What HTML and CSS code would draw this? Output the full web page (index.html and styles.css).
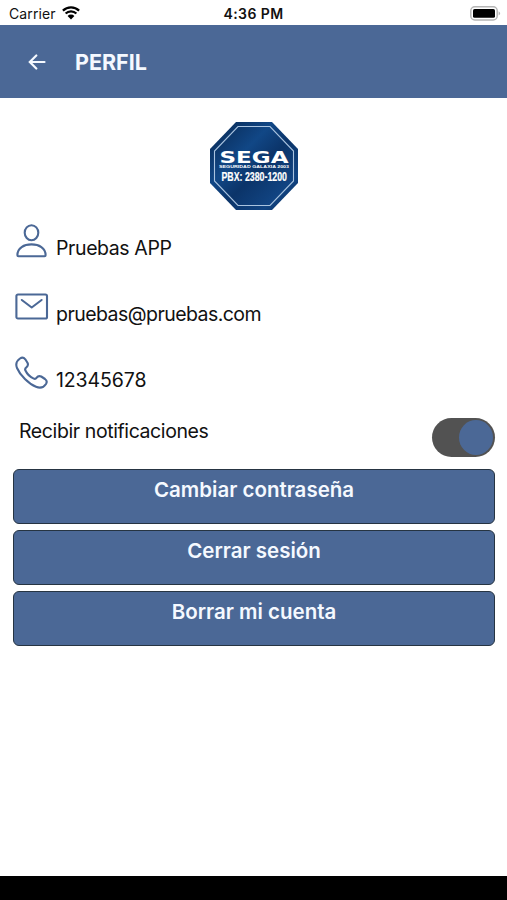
FILE: index.html
```html
<!DOCTYPE html>
<html lang="es">

<head>
    <meta charset="UTF-8">
    <meta name="viewport" content="width=device-width, initial-scale=1.0">
    <title>Perfil</title>
    <link rel="stylesheet" href="styles.css">
</head>

<body>
    <div class="status-bar">
        <div class="carrier">
            <span>Carrier</span>
            <svg class="wifi" width="18" height="14" viewBox="0 0 18 14">
                <path d="M0.9 4.6a11.6 11.6 0 0 1 16.2 0M3.6 7.5a7.7 7.7 0 0 1 10.8 0" fill="none" stroke="#000" stroke-width="2.2" />
                <path d="M9 13.5L5.6 10a4.8 4.8 0 0 1 6.8 0z" fill="#000" />
            </svg>
        </div>
        <div class="time">4:36 PM</div>
        <div class="battery">
            <svg width="31" height="15" viewBox="0 0 31 15">
                <rect x="0.8" y="0.8" width="26.4" height="13.2" rx="4" fill="#fff" stroke="#b5b5b5" stroke-width="1.5" />
                <rect x="3" y="3" width="22" height="8.8" rx="1.6" fill="#000" />
                <path d="M28.6 5.2q3 2.2 0 4.4z" fill="#b5b5b5" />
            </svg>
        </div>
    </div>

    <header class="header">
        <svg class="back" width="18" height="16" viewBox="0 0 18 16">
            <path d="M16.5 8H2M8.3 1.5L1.8 8L8.3 14.5" />
        </svg>
        <h1>PERFIL</h1>
    </header>

    <main class="content">
        <svg class="logo" width="88" height="88" viewBox="0 0 88 88">
            <defs>
                <linearGradient id="shield" x1="0" y1="0" x2="1" y2="1">
                    <stop offset="0" stop-color="#07264f" />
                    <stop offset="0.36" stop-color="#114786" />
                    <stop offset="0.55" stop-color="#0b3469" />
                    <stop offset="0.8" stop-color="#114482" />
                    <stop offset="1" stop-color="#082a58" />
                </linearGradient>
            </defs>
            <path d="M26 0H62L88 27V61L62 88H26L0 61V27z" fill="url(#shield)" />
            <path d="M28 4.5H60L83.5 29V59L60 83.5H28L4.5 59V29z" fill="none" stroke="#a9c3df" stroke-width="1.1" />
            <text class="logo-name" x="9.5" y="40.8" textLength="69" lengthAdjust="spacingAndGlyphs">SEGA</text>
            <text class="logo-sub" x="9" y="45.8" textLength="70" lengthAdjust="spacingAndGlyphs">SEGURIDAD GALAXIA 2003</text>
            <text class="logo-phone" x="11.5" y="59" textLength="65.5" lengthAdjust="spacingAndGlyphs">PBX: 2380-1200</text>
        </svg>

        <div class="info">
            <div class="row">
                <svg class="icon" width="34" height="34" viewBox="0 0 34 34">
                    <ellipse cx="16.5" cy="8.7" rx="6.8" ry="7.5" />
                    <path d="M2.4 31.2C2.4 23.8 9 20.4 16.5 20.4S30.6 23.8 30.6 31.2Q30.6 32.3 29.5 32.3H3.5Q2.4 32.3 2.4 31.2z" />
                </svg>
                <span class="name">Pruebas APP</span>
            </div>
            <div class="row">
                <svg class="icon" width="34" height="34" viewBox="0 0 34 34">
                    <rect x="1.4" y="4.5" width="30.6" height="24" rx="1.6" />
                    <path d="M6.8 10L16.7 17.5L26.6 10" />
                </svg>
                <span class="email">pruebas@pruebas.com</span>
            </div>
            <div class="row">
                <svg class="icon" width="34" height="34" viewBox="0 0 34 34">
                    <path d="M5 2.5Q8 0.4 10.3 3.3L12.6 7Q13.6 9.5 11.6 11.2Q9.6 12.5 10.3 14.3C12 18 15 21 18.8 22.6Q20.5 23.3 21.7 21.7Q23.4 19.2 26.2 20.5L30 23Q32.8 25 31 28C28.5 31.8 25 32.5 21 30.8C13.8 28 5 19.2 2 12C0.4 8 1.3 5 5 2.5z" />
                </svg>
                <span class="phone">12345678</span>
            </div>
        </div>

        <div class="notifications">
            <span class="label">Recibir notificaciones</span>
            <div class="switch">
                <div class="knob"></div>
            </div>
        </div>

        <div class="buttons">
            <button class="btn">Cambiar contraseña</button>
            <button class="btn">Cerrar sesión</button>
            <button class="btn">Borrar mi cuenta</button>
        </div>
    </main>

    <footer class="bottom-bar"></footer>
</body>

</html>
```
FILE: styles.css
```css
* {
    box-sizing: border-box;
}

body {
    font-family: Inter, "Liberation Sans", sans-serif;
    background-color: #fff;
    color: #111;
    margin: 0;
    height: 900px;
    display: flex;
    flex-direction: column;
    overflow: hidden;
}

.status-bar {
    height: 25px;
    padding: 2px 6px 0 9px;
    display: grid;
    grid-template-columns: 1fr auto 1fr;
    align-items: center;
    font-size: 14px;
}

.carrier {
    display: flex;
    align-items: center;
    gap: 6px;
    letter-spacing: 0.1px;
}

.wifi {
    margin-top: -2px;
}

.time {
    margin-right: 3px;
    font-weight: 600;
    letter-spacing: 0.4px;
}

.battery {
    display: flex;
    justify-content: flex-end;
    margin-top: -1px;
}

.header {
    height: 73px;
    padding-left: 28px;
    display: flex;
    align-items: center;
    gap: 29px;
    background-color: #4b6896;
    color: #f5f9ff;
}

.header h1 {
    margin: 0;
    padding-top: 1px;
    font-size: 21.5px;
    font-weight: 700;
}

.back path {
    fill: none;
    stroke: #f5f9ff;
    stroke-width: 2.2;
    stroke-linecap: round;
}

.content {
    flex: 1;
    padding: 24px 12px 0 13px;
    display: flex;
    flex-direction: column;
}

.logo {
    align-self: center;
    overflow: visible;
}

.logo text {
    fill: #fff;
    font-family: "Liberation Sans", sans-serif;
    font-weight: 700;
}

.logo .logo-name {
    font-family: "DejaVu Sans", sans-serif;
    font-size: 15.5px;
}

.logo .logo-sub {
    font-size: 3.8px;
}

.logo .logo-phone {
    font-size: 12px;
    stroke: #fff;
    stroke-width: 0.2;
}

.info {
    padding: 14px 0 0 2px;
}

.row {
    height: 66px;
    display: flex;
    gap: 7px;
    font-size: 19.5px;
    line-height: 24px;
    letter-spacing: -0.4px;
}

.row span {
    padding-top: 12px;
}

.row .email {
    letter-spacing: -0.55px;
}

.row .phone {
    letter-spacing: -0.1px;
}

.icon {
    fill: none;
    stroke: #4b6896;
    stroke-width: 2.1;
    stroke-linejoin: round;
    stroke-linecap: round;
}

.notifications {
    height: 47px;
    margin-top: -4px;
    padding-left: 6px;
    display: flex;
    justify-content: space-between;
    font-size: 19.5px;
    line-height: 26px;
    letter-spacing: -0.4px;
}

.switch {
    width: 63px;
    height: 39px;
    padding: 2px;
    display: flex;
    justify-content: flex-end;
    border-radius: 20px;
    background-color: #525252;
}

.knob {
    width: 34px;
    height: 35px;
    border-radius: 50%;
    background-color: #4b6896;
}

.buttons {
    padding-top: 4px;
    display: flex;
    flex-direction: column;
    gap: 6px;
}

.btn {
    height: 55px;
    padding: 0 0 15px;
    border: 1px solid #263442;
    border-radius: 6px;
    background-color: #4b6896;
    color: #f5f9ff;
    font-family: inherit;
    font-size: 20.5px;
    font-weight: 600;
}

.bottom-bar {
    height: 24px;
    background-color: #000;
}
```
